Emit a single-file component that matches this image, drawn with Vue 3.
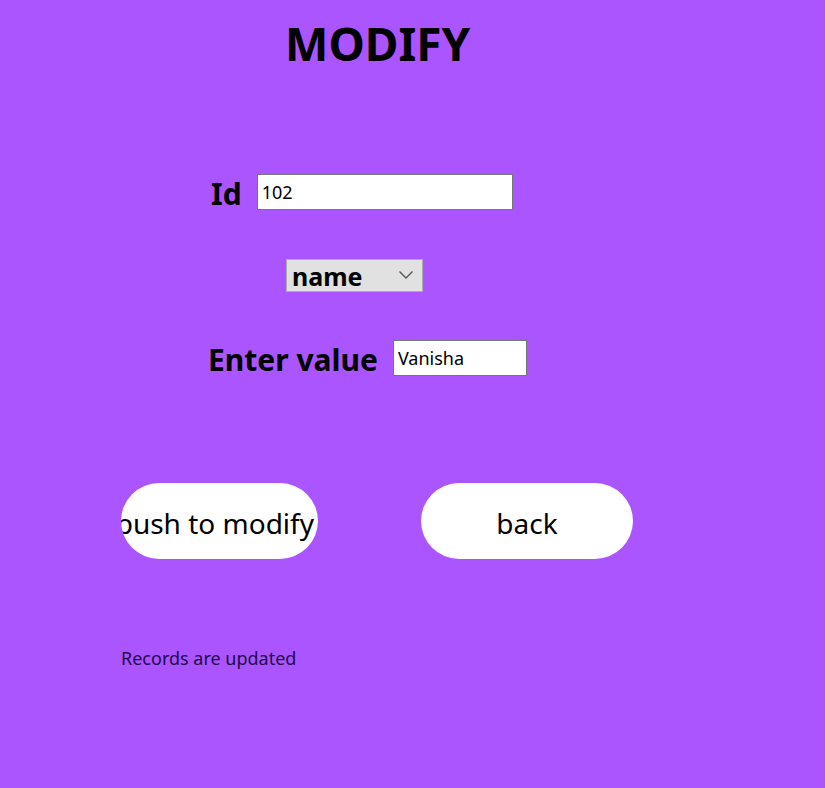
<script setup>
import { ref } from 'vue'

const id = ref('102')
const field = ref('name')
const value = ref('Vanisha')
const status = ref('Records are updated')
</script>

<template>
  <main class="page">
    <h1 class="title">MODIFY</h1>
    <form class="form" @submit.prevent>
      <div class="row row-id">
        <label class="label" for="record-id">Id</label>
        <input id="record-id" v-model="id" class="entry entry-wide" type="text" />
      </div>
      <div class="row row-field">
        <div class="picker">
          <select v-model="field" class="select" aria-label="Field">
            <option value="name">name</option>
          </select>
          <svg class="chevron" viewBox="0 0 16 10" aria-hidden="true">
            <path d="M1.5 1.5 8 8 14.5 1.5" fill="none" stroke="#555" stroke-width="1.4" />
          </svg>
        </div>
      </div>
      <div class="row row-value">
        <label class="label" for="new-value">Enter value</label>
        <input id="new-value" v-model="value" class="entry" type="text" />
      </div>
      <div class="actions">
        <button class="button button-push" type="submit"><span>push to modify</span></button>
        <button class="button button-back" type="button"><span>back</span></button>
      </div>
    </form>
    <output class="status">{{ status }}</output>
  </main>
</template>

<style>
body {
  background: #aa55ff;
}
</style>

<style scoped>
.page {
  box-sizing: border-box;
  min-height: 100vh;
  padding: 15px 24px 24px 121px;
  border-right: 1px solid #f4eaff;
  background: #aa55ff;
  color: #000;
  font-family: Tahoma, "Noto Sans", sans-serif;
}

.title {
  margin: 0 0 0 164px;
  font-size: 46px;
  line-height: 56px;
}

.form {
  padding-top: 103px;
}

.row {
  display: flex;
  align-items: center;
  gap: 15px;
  height: 36px;
  margin-bottom: 47px;
}

.row-id {
  margin-left: 90px;
}

.row-field {
  margin-left: 165px;
}

.row-value {
  margin-left: 87px;
}

.label {
  padding-top: 4px;
  font-size: 30px;
  font-weight: 700;
  line-height: 32px;
}

.entry {
  box-sizing: border-box;
  width: 134px;
  height: 36px;
  padding: 0 4px;
  border: 1px solid #767676;
  border-radius: 0;
  background: #fff;
  color: #000;
  font: 18px Tahoma, "Noto Sans", sans-serif;
}

.entry-wide {
  width: 256px;
}

.picker {
  display: grid;
  align-items: center;
  width: 137px;
}

.select {
  grid-area: 1 / 1;
  box-sizing: border-box;
  width: 100%;
  height: 33px;
  padding: 1px 32px 0 5px;
  border: 1px solid #adadad;
  border-radius: 0;
  appearance: none;
  background: #e1e1e1;
  color: #000;
  font: 700 25px/30px Tahoma, "Noto Sans", sans-serif;
}

.chevron {
  grid-area: 1 / 1;
  justify-self: end;
  width: 16px;
  height: 10px;
  margin-right: 9px;
  pointer-events: none;
}

.actions {
  display: flex;
  gap: 103px;
  padding-top: 60px;
}

.button {
  display: flex;
  align-items: center;
  justify-content: center;
  height: 76px;
  padding: 4px 0 0;
  overflow: hidden;
  border: 0;
  border-radius: 38px;
  background: #fff;
  color: #000;
  font: 28px Tahoma, "Noto Sans", sans-serif;
  white-space: nowrap;
}

.button-push {
  justify-content: flex-end;
  width: 197px;
  padding-right: 4px;
}

.button-back {
  width: 212px;
}

.status {
  display: block;
  padding-top: 87px;
  color: #24074a;
  font-size: 18px;
  line-height: 24px;
}
</style>
